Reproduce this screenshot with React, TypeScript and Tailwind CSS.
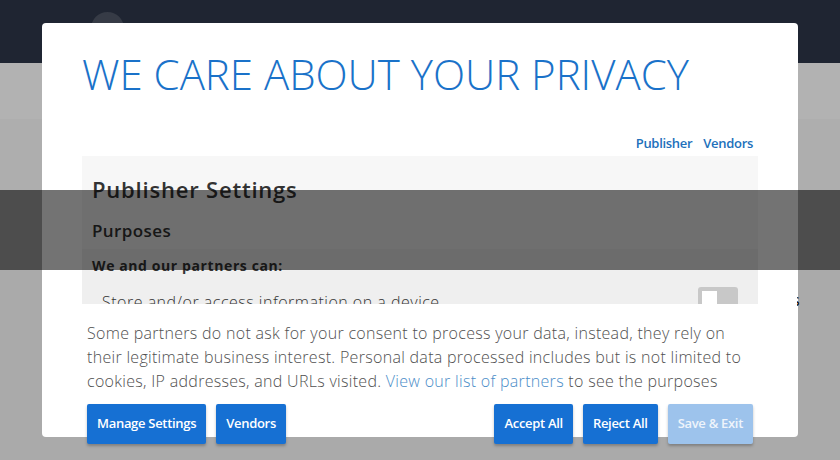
import React from 'react';

const font = { fontFamily: "'Open Sans', 'Liberation Sans', sans-serif" };

function Btn({ label, muted }: { label: string; muted?: boolean }) {
  return (
    <button
      className={
        'h-[40px] px-[10px] rounded-[2px] text-[13px] font-semibold tracking-[-0.3px] shadow-[0_2px_3px_rgba(0,0,0,0.25)] ' +
        (muted ? 'bg-[#9dc3ec] text-[#eef4fb]' : 'bg-[#1670d3] text-white')
      }
    >
      {label}
    </button>
  );
}

export default function App() {
  return (
    <div className="relative w-[840px] h-[460px] overflow-hidden bg-[#aaaaaa]" style={font}>
      {/* page behind the overlay */}
      <div className="h-[63px] bg-[#1f2532] flex items-start pl-[91px] pt-[12px]">
        <div className="w-[33px] h-[33px] rounded-full bg-[#363b46]" />
      </div>
      <div className="h-[56px] bg-[#b2b2b2]" />
      <div className="h-[71px] bg-[#aeaeae]" />

      {/* consent modal */}
      <div className="absolute left-[42px] top-[23px] w-[756px] h-[414px] bg-white rounded-[4px] px-[40px]">
        <h1 className="mt-[30px] text-[42px] leading-[42px] font-light text-[#1a72c9]">
          WE CARE ABOUT YOUR PRIVACY
        </h1>
        <div className="mt-[39px] flex justify-end gap-[11px] pr-[5px] text-[13px] leading-[18px] font-semibold tracking-[-0.3px] text-[#2170bb]">
          <span>Publisher</span>
          <span>Vendors</span>
        </div>
        <div className="mt-[4px] h-[148px] overflow-hidden text-[#333]">
          <div className="h-[93px] bg-[#f7f7f7] px-[10px] pt-[18px]">
            <h2 className="text-[22px] leading-[30px] font-semibold tracking-[0.8px]">Publisher Settings</h2>
            <h3 className="mt-[15px] text-[17px] leading-[24px] font-semibold tracking-[0.4px]">Purposes</h3>
          </div>
          <div className="bg-[#efefef] px-[10px] pt-[7px] h-[200px]">
            <p className="text-[14px] leading-[20px] font-bold tracking-[0.6px]">We and our partners can:</p>
            <div className="mt-[14px] flex items-start justify-between pl-[10px] pr-[10px]">
              <span className="text-[16px] leading-[24px] font-light tracking-[0.5px]">Store and/or access information on a device</span>
              <div className="-mt-[3px] w-[40px] h-[22px] rounded-[3px] bg-[#c8c8c8] p-[4px]">
                <div className="w-[15px] h-[16px] bg-white" />
              </div>
            </div>
          </div>
        </div>
        <p className="mt-[17px] px-[5px] text-[16px] leading-[24px] font-light tracking-[0.3px] text-[#505050]">
          Some partners do not ask for your consent to process your data, instead, they rely on their
          legitimate business interest. Personal data processed includes but is not limited to cookies,
          IP addresses, and URLs visited. <span className="text-[#4a8dc8]">View our list of partners</span> to
          see the purposes
        </p>
        <div className="mt-[11px] px-[5px] flex justify-between">
          <div className="flex gap-[10px]">
            <Btn label="Manage Settings" />
            <Btn label="Vendors" />
          </div>
          <div className="flex gap-[10px]">
            <Btn label="Accept All" />
            <Btn label="Reject All" />
            <Btn label="Save & Exit" muted />
          </div>
        </div>
      </div>

      {/* sticky band over everything */}
      <div className="absolute left-0 top-[190px] w-[840px] h-[80px] bg-black/55" />

      <div className="absolute left-[797px] top-[290px] w-[6px] h-[20px] overflow-hidden">
        <span className="block -ml-[5px] text-[16px] leading-[20px] text-black">s</span>
      </div>
    </div>
  );
}
